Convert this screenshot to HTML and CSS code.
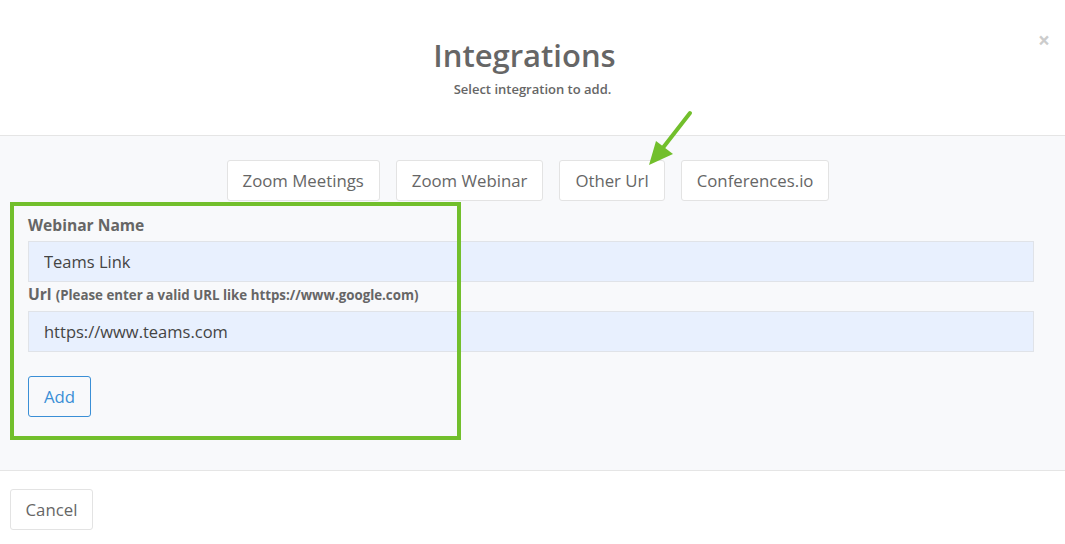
FILE: index.html
```html
<!DOCTYPE html>
<html lang="en">
<head>
    <meta charset="UTF-8">
    <meta name="viewport" content="width=device-width, initial-scale=1.0">
    <title>Integrations</title>
    <link rel="stylesheet" href="styles.css">
</head>
<body>
<div id="modal">
    <div id="header">
        <span class="close">&times;</span>
        <h1>Integrations</h1>
        <p>Select integration to add.</p>
    </div>
    <div id="body">
        <div id="tabs">
            <button class="tab">Zoom Meetings</button>
            <button class="tab">Zoom Webinar</button>
            <button class="tab">Other Url</button>
            <button class="tab">Conferences.io</button>
        </div>
        <form id="otherUrl">
            <label>Webinar Name</label>
            <input type="text" value="Teams Link">
            <label>Url <small>(Please enter a valid URL like https://www.google.com)</small></label>
            <input type="text" value="https://www.teams.com">
            <div class="actions">
                <button type="button" class="add">Add</button>
            </div>
        </form>
        <!-- annotation overlay -->
        <div class="highlight"></div>
        <svg class="arrow" width="60" height="70" viewBox="0 0 60 70">
            <line x1="50" y1="4" x2="22" y2="40" stroke="#72bf2c" stroke-width="4" stroke-linecap="round"/>
            <polygon points="9,56 16,32 33,45" fill="#72bf2c"/>
        </svg>
    </div>
    <div id="footer">
        <button class="cancel">Cancel</button>
    </div>
</div>
</body>
</html>
```

FILE: styles.css
```css
body {
    font-family: 'Open Sans', sans-serif;
    background-color: #fff;
    margin: 0;
    padding: 0;
    color: #555;
}

#header {
    position: relative;
    height: 136px;
    box-sizing: border-box;
    padding-top: 35px;
    text-align: center;
    border-bottom: 1px solid #e5e5e5;
}

#header h1 {
    margin: 0;
    padding-right: 16px;
    font-size: 31px;
    font-weight: 600;
    color: #666;
    line-height: 40px;
}

#header p {
    margin: 5px 0 0;
    font-size: 13px;
    font-weight: 600;
    color: #666;
}

.close {
    position: absolute;
    right: 15px;
    top: 26px;
    font-size: 21px;
    font-weight: 700;
    color: #ccc;
}

#body {
    position: relative;
    background-color: #f8f9fb;
    padding: 24px 31px 26px 28px;
    height: 335px;
    box-sizing: border-box;
    border-bottom: 1px solid #e5e5e5;
}

#tabs {
    display: flex;
    justify-content: center;
    gap: 16px;
    margin-right: 6px;
}

button {
    font-family: 'Open Sans', sans-serif;
    font-size: 16.8px;
    background-color: #fff;
    color: #666;
    border: 1px solid #e3e3e3;
    border-radius: 3px;
    height: 41px;
    padding: 0 15px;
}

#otherUrl {
    display: flex;
    flex-direction: column;
    padding-top: 12px;
}

label {
    font-size: 15.6px;
    font-weight: 700;
    color: #666;
    line-height: 24px;
    margin-bottom: 4px;
}

label small {
    font-size: 13.3px;
}

input {
    font-family: 'Open Sans', sans-serif;
    font-size: 16.5px;
    color: #444;
    height: 41px;
    box-sizing: border-box;
    padding: 0 15px;
    background-color: #e8f0fe;
    border: 1px solid #e0e3e8;
}

.actions {
    margin-top: 24px;
}

.add {
    color: #3a8fd6;
    border-color: #3a8fd6;
    background-color: transparent;
    width: 63px;
    padding: 0;
}

.highlight {
    position: absolute;
    left: 10px;
    top: 66px;
    width: 451px;
    height: 238px;
    box-sizing: border-box;
    border: 4px solid #72bf2c;
}

.arrow {
    position: absolute;
    left: 640px;
    top: -27px;
}

#footer {
    padding: 18px 10px;
}

.cancel {
    width: 83px;
    padding: 0;
}
```
